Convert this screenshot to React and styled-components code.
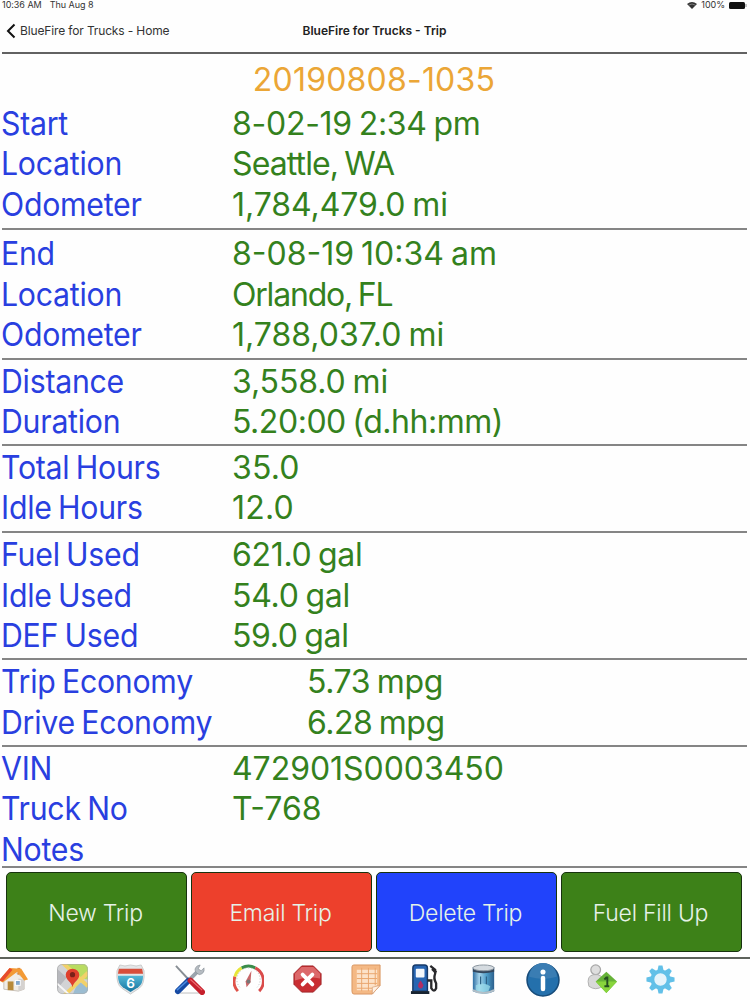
import React from "react";
import styled, { createGlobalStyle } from "styled-components";

const sections = [
  {
    top: 3.2,
    height: 129,
    rows: [
      { label: "Start", value: "8-02-19 2:34 pm", spacing: -0.27 },
      { label: "Location", value: "Seattle, WA", spacing: -0.9 },
      { label: "Odometer", value: "1,784,479.0 mi", spacing: -0.07 },
    ],
  },
  {
    top: 4.6,
    height: 130,
    rows: [
      { label: "End", value: "8-08-19 10:34 am" },
      { label: "Location", value: "Orlando, FL", spacing: -1.2 },
      { label: "Odometer", value: "1,788,037.0 mi" },
    ],
  },
  {
    top: 2.2,
    height: 86,
    rows: [
      { label: "Distance", value: "3,558.0 mi", spacing: -0.1 },
      { label: "Duration", value: "5.20:00 (d.hh:mm)", spacing: -0.47 },
    ],
  },
  {
    top: 2.6,
    height: 88,
    rows: [
      { label: "Total Hours", value: "35.0", spacing: 0.2 },
      { label: "Idle Hours", value: "12.0", spacing: 0.2 },
    ],
  },
  {
    top: 2,
    height: 127,
    rows: [
      { label: "Fuel Used", value: "621.0 gal", spacing: -0.33 },
      { label: "Idle Used", value: "54.0 gal", spacing: -0.25 },
      { label: "DEF Used", value: "59.0 gal", spacing: -0.35 },
    ],
  },
  {
    top: 2,
    height: 87,
    wide: true,
    rows: [
      { label: "Trip Economy", value: "5.73 mpg", spacing: -0.38 },
      { label: "Drive Economy", value: "6.28 mpg", spacing: -0.5 },
    ],
  },
  {
    top: 1.6,
    height: 121,
    rows: [
      { label: "VIN", value: "472901S0003450", spacing: -0.05 },
      { label: "Truck No", value: "T-768" },
      { label: "Notes", value: "" },
    ],
  },
];

const actions = [
  { name: "New Trip", color: "#3d8118" },
  { name: "Email Trip", color: "#ed402c" },
  { name: "Delete Trip", color: "#2143fb" },
  { name: "Fuel Fill Up", color: "#3d8118" },
];

function HomeIcon() {
  return (
    <Icon viewBox="0 0 32 32">
      <path d="M6 16 L16 7 L27 15 V26 L21 28 L6 26Z" fill="#f0ece6" stroke="#b5aca2" strokeWidth=".7" />
      <path d="M21 15 L27 16 V26 L21 28Z" fill="#d5d2d0" />
      <rect x="20" y="4" width="3" height="7" fill="#d98b43" />
      <path d="M1 17 L12 4 L24 5 L31 16 L27 17 L20 8 L5 19Z" fill="#f39a35" />
      <path d="M1 17 L12 4 L15 6 L5 18Z" fill="#e64b2c" />
      <rect x="10" y="18" width="6" height="9" fill="#b78a39" />
      <rect x="18" y="17" width="5" height="5" fill="#83a8cc" stroke="#fff" />
    </Icon>
  );
}

function MapIcon() {
  return (
    <Icon viewBox="0 0 32 32">
      <clipPath id="mapShape">
        <rect x="0" y="0" width="32" height="31" rx="5" />
      </clipPath>
      <g clipPath="url(#mapShape)">
        <rect width="32" height="32" fill="#d2d3d5" />
        <path d="M8 0H32V16L21 15Z" fill="#b9dc61" />
        <path d="M0 5L10 14L0 26Z" fill="#b7b8bd" />
        <path d="M22 18L32 23V32H16Z" fill="#9bbcd1" />
        <path d="M5 -2L32 23M32 9L7 33" stroke="#f2d169" strokeWidth="4" />
        <path d="M0 20L13 32" stroke="#f7f7f7" strokeWidth="2" />
      </g>
      <path d="M16 24C15 18 9 17 9 11a7 6 0 0 1 14 0C23 17 17 18 16 24Z" fill="#df3f2c" />
      <circle cx="16" cy="11" r="2.7" fill="#792019" />
      <rect x=".5" y=".5" width="31" height="30" rx="5" fill="none" stroke="#aaa" strokeOpacity=".6" />
    </Icon>
  );
}

function RouteIcon() {
  return (
    <Icon viewBox="0 0 32 32">
      <linearGradient id="routeBlue" x2="0" y2="1">
        <stop stopColor="#53b8d8" />
        <stop offset="1" stopColor="#16739d" />
      </linearGradient>
      <path d="M5 1Q10 3 16 1Q22 3 27 1L30 7Q31 21 25 25L16 31L7 25Q1 21 2 7Z" fill="#e3e6e8" stroke="#bbb" strokeWidth=".7" />
      <path d="M4 5H28L29 10H3Z" fill="#d84e3b" />
      <path d="M3 12H29Q29 20 24 24L16 29L8 24Q3 20 3 12Z" fill="url(#routeBlue)" />
      <RouteNumber x="16" y="25">6</RouteNumber>
    </Icon>
  );
}

function ToolsIcon() {
  return (
    <Icon viewBox="0 0 32 32">
      <path d="M6 30H28" stroke="#ddd" strokeWidth="2" />
      <path d="M2 2L16 17" stroke="#888e94" strokeWidth="2" />
      <path d="M17 15L25 7" stroke="#9ba4ad" strokeWidth="4" />
      <path d="M23 9Q20 5 24 2L27 1L25 5L28 7L31 4Q32 10 26 11Z" fill="#b6bcc2" stroke="#7f888f" strokeWidth=".6" />
      <path d="M4 28L15 17" stroke="#164aa3" strokeWidth="6" strokeLinecap="round" />
      <path d="M3 27L14 17" stroke="#4b8be0" strokeWidth="1.5" />
      <path d="M17 17L29 29" stroke="#c51f2b" strokeWidth="6" strokeLinecap="round" />
      <path d="M17 16L29 27" stroke="#ee6d70" strokeWidth="1.2" />
    </Icon>
  );
}

function GaugeIcon() {
  return (
    <Icon viewBox="0 0 32 32">
      <g fill="none" strokeWidth="3">
        <path d="M5 28A15 15 0 0 1 2 13" stroke="#df5148" />
        <path d="M2 13A15 15 0 0 1 9 4" stroke="#e7e53a" />
        <path d="M9 4A15 15 0 0 1 23 4" stroke="#398c49" />
        <path d="M23 4A15 15 0 0 1 27 28" stroke="#d94b4a" />
      </g>
      <path d="M7 24A12 12 0 1 1 25 24" fill="none" stroke="#b9b9b9" strokeWidth="1" strokeDasharray="1 2" />
      <path d="M19 7L18 19L14 24L13 18Z" fill="#c96668" />
      <circle cx="16" cy="18" r="2" fill="#777" />
    </Icon>
  );
}

function StopIcon() {
  return (
    <Icon viewBox="0 0 32 32">
      <path d="M10 2H22L30 10V21L22 29H10L2 21V10Z" fill="#c92e32" stroke="#9f2529" />
      <path d="M10 3H22L29 10V15Q16 12 3 17V10Z" fill="#dc686a" />
      <path d="M11 11L21 21M21 11L11 21" stroke="#fff" strokeWidth="4" strokeLinecap="round" />
    </Icon>
  );
}

function NotesIcon() {
  return (
    <Icon viewBox="0 0 32 32">
      <path d="M3 1H30V22L22 31H3Q1 31 1 28V3Q1 1 3 1Z" fill="#f4b985" stroke="#d99661" />
      <path d="M6 6H27V22L21 27H6Z" fill="#fce2c9" />
      <path d="M6 10H27M6 15H27M6 20H27M6 25H22M11 4V28M18 4V28M25 4V22" stroke="#e9a56d" strokeWidth="1" />
      <path d="M22 31V24L30 22Z" fill="#fff1e3" stroke="#d39a70" strokeWidth=".7" />
    </Icon>
  );
}

function PumpIcon() {
  return (
    <Icon viewBox="0 0 32 32">
      <path d="M4 28V4Q4 1 7 1H16Q19 1 19 4V28Z" fill="#2765b2" stroke="#173a68" strokeWidth="1.5" />
      <path d="M2 28H21V31H2Z" fill="#172330" />
      <rect x="7" y="5" width="9" height="9" rx="1" fill="#f3f7fb" />
      <path d="M12 17L15 22Q14 26 11 25Q7 23 12 17Z" fill="#b12d63" />
      <path d="M22 2L27 6V10Q25 15 28 20V25Q26 30 23 25V17H19" fill="none" stroke="#29292c" strokeWidth="2.4" />
      <path d="M24 5L28 9" stroke="#29292c" strokeWidth="3" />
    </Icon>
  );
}

function BarrelIcon() {
  return (
    <Icon viewBox="0 0 32 32">
      <linearGradient id="barrelBlue">
        <stop stopColor="#2f6fa3" />
        <stop offset=".3" stopColor="#a5d3ea" />
        <stop offset=".65" stopColor="#4c9cc8" />
        <stop offset="1" stopColor="#2c5f8c" />
      </linearGradient>
      <path d="M5 3V28Q16 34 27 28V3Z" fill="url(#barrelBlue)" />
      <path d="M5 4V8Q16 11 27 8V4Z" fill="#33475d" />
      <ellipse cx="16" cy="4" rx="11" ry="3" fill="#d5dbe0" stroke="#89949d" />
      <path d="M8 22Q16 18 23 23L21 28Q13 30 8 27Z" fill="#9fe0ec" fillOpacity=".7" />
      <path d="M13 13V21M19 13V21" stroke="#2d6286" strokeWidth="1.2" />
      <path d="M5 27Q16 33 27 27" fill="none" stroke="#b3bfc7" strokeWidth="2" />
    </Icon>
  );
}

function InfoIcon() {
  return (
    <Icon viewBox="0 0 32 32" $size={34}>
      <circle cx="16" cy="16" r="15" fill="#2470ac" stroke="#174c7a" strokeWidth="1.5" />
      <path d="M3 13A13 13 0 0 1 29 13Q16 17 3 13Z" fill="#3a7db3" />
      <circle cx="16" cy="8.5" r="2.4" fill="#fff" />
      <path d="M16 14V24.5" stroke="#fff" strokeWidth="4.2" strokeLinecap="round" />
    </Icon>
  );
}

function DriverIcon() {
  return (
    <Icon viewBox="0 0 32 32">
      <circle cx="10" cy="6" r="5" fill="#dedede" stroke="#a7a7a7" strokeWidth="1.3" />
      <path d="M3 23Q0 12 8 11H12Q19 12 17 23Q10 28 3 23Z" fill="#d9d9d9" stroke="#b0b0b0" />
      <path d="M21 8L32 18L21 30L10 18Z" fill="#66b238" />
      <path d="M10 18H32L21 30Z" fill="#88d53c" />
      <path d="M19 16L21 14H22V23M19 23H24" stroke="#264f20" strokeWidth="2" fill="none" />
    </Icon>
  );
}

function SettingsIcon() {
  const teeth = [0, 45, 90, 135, 180, 225, 270, 315];
  return (
    <Icon viewBox="0 0 32 32">
      <g fill="#62c0e8">
        {teeth.map((angle) => (
          <path key={angle} d="M12.5 8L14 1.5H18L19.5 8Z" transform={`rotate(${angle} 16 16)`} />
        ))}
      </g>
      <circle cx="16" cy="16" r="8.4" fill="#e6f4fb" stroke="#62c0e8" strokeWidth="4" />
    </Icon>
  );
}

const icons = [
  HomeIcon,
  MapIcon,
  RouteIcon,
  ToolsIcon,
  GaugeIcon,
  StopIcon,
  NotesIcon,
  PumpIcon,
  BarrelIcon,
  InfoIcon,
  DriverIcon,
  SettingsIcon,
];

function App() {
  return (
    <>
      <GlobalStyle />
      <Screen>
        <StatusBar>
          <StatusText>10:36 AM</StatusText>
          <StatusText>Thu Aug 8</StatusText>
          <StatusRight>
            <svg width="10" height="7" viewBox="0 0 10 7">
              <path d="M0 2Q5 -2 10 2L5 7Z" fill="#333" />
              <path d="M1.5 3.2Q5 .8 8.5 3.2" fill="none" stroke="#aaa" strokeWidth=".6" />
            </svg>
            <StatusText>100%</StatusText>
            <svg width="18" height="7" viewBox="0 0 18 7">
              <rect x="0" y="0" width="16" height="7" rx="1.5" fill="#111" />
              <path d="M17 2V5" stroke="#888" />
            </svg>
          </StatusRight>
        </StatusBar>
        <NavBar>
          <BackButton>
            <svg width="10" height="16" viewBox="0 0 10 16">
              <path d="M8.5 1.5L2 8L8.5 14.5" fill="none" stroke="#111" strokeWidth="2" />
            </svg>
            BlueFire for Trucks - Home
          </BackButton>
          <NavTitle>BlueFire for Trucks - Trip</NavTitle>
        </NavBar>
        <TripName>20190808-1035</TripName>
        {sections.map((section, i) => (
          <Section key={i} $top={section.top} $height={section.height}>
            {section.rows.map((row) => (
              <Row key={row.label} $wide={section.wide}>
                <Label>{row.label}</Label>
                <Value $spacing={row.spacing}>{row.value}</Value>
              </Row>
            ))}
          </Section>
        ))}
        <ButtonArea>
          {actions.map((action) => (
            <Button key={action.name} $color={action.color}>
              {action.name}
            </Button>
          ))}
        </ButtonArea>
        <TabBar>
          {icons.map((TabIcon, i) => (
            <Tab key={i}>
              <TabIcon />
            </Tab>
          ))}
        </TabBar>
      </Screen>
    </>
  );
}

const GlobalStyle = createGlobalStyle`
  * {
    box-sizing: border-box;
  }
  body {
    margin: 0;
    background: #fefefe;
    font-family: Inter, "Liberation Sans", sans-serif;
  }
`;

const Screen = styled.div`
  width: 750px;
  height: 1000px;
  overflow: hidden;
  display: flex;
  flex-direction: column;
`;

const StatusBar = styled.div`
  height: 11px;
  padding: 0 3px 0 2px;
  display: flex;
  gap: 8px;
  align-items: center;
`;

const StatusText = styled.span`
  font-size: 9px;
  line-height: 10px;
  letter-spacing: -0.03px;
  color: #333;
`;

const StatusRight = styled.div`
  margin-left: auto;
  display: flex;
  align-items: center;
  gap: 4px;
`;

const NavBar = styled.div`
  height: 43px;
  margin: 0 3px 0 2px;
  padding-bottom: 1px;
  border-bottom: 2px solid #626262;
  display: grid;
  grid-template-columns: 1fr auto 1fr;
  align-items: center;
`;

const BackButton = styled.div`
  padding-left: 4px;
  display: flex;
  align-items: center;
  gap: 4px;
  font-size: 12px;
  letter-spacing: -0.14px;
  color: #333;
  white-space: nowrap;
`;

const NavTitle = styled.div`
  font-size: 12px;
  font-weight: 600;
  color: #222;
`;

const TripName = styled.div`
  height: 47px;
  padding-top: 6px;
  padding-right: 2px;
  font-size: 32px;
  line-height: 40px;
  letter-spacing: 0.2px;
  text-align: center;
  color: #eba636;
`;

const Section = styled.div`
  height: ${(props) => props.$height}px;
  margin: 0 3px 0 2px;
  padding-top: ${(props) => props.$top}px;
  border-bottom: 2px solid #858585;
`;

const Row = styled.div`
  height: 40.4px;
  display: grid;
  grid-template-columns: ${(props) => (props.$wide ? "305px" : "230px")} 1fr;
  font-size: 32px;
  line-height: 40.4px;
  white-space: nowrap;
`;

const Label = styled.div`
  margin-left: -0.7px;
  letter-spacing: -0.25px;
  word-spacing: -2px;
  transform: scaleX(0.945);
  transform-origin: left;
  color: #293fe0;
`;

const Value = styled.div`
  letter-spacing: ${(props) => props.$spacing || 0}px;
  word-spacing: -2px;
  color: #34811d;
`;

const ButtonArea = styled.div`
  height: 91px;
  padding: 4px 8px 5px 6px;
  border-bottom: 2px solid #5d625b;
  display: grid;
  grid-template-columns: repeat(4, 1fr);
  gap: 4px;
`;

const Button = styled.button`
  padding: 2px 2px 0 0;
  border: 1.5px solid #17320e;
  border-radius: 5px;
  background: ${(props) => props.$color};
  color: #e6f2e8;
  font-family: inherit;
  font-size: 23px;
  font-weight: 350;
  letter-spacing: -0.25px;
`;

const TabBar = styled.div`
  height: 41px;
  margin-left: -16px;
  display: flex;
`;

const Tab = styled.div`
  width: 58.8px;
  display: flex;
  align-items: center;
  justify-content: center;
`;

const Icon = styled.svg`
  width: ${(props) => props.$size || 31}px;
  height: ${(props) => props.$size || 31}px;
`;

const RouteNumber = styled.text`
  font-size: 14px;
  font-weight: 600;
  fill: #fff;
  text-anchor: middle;
`;

export default App;
